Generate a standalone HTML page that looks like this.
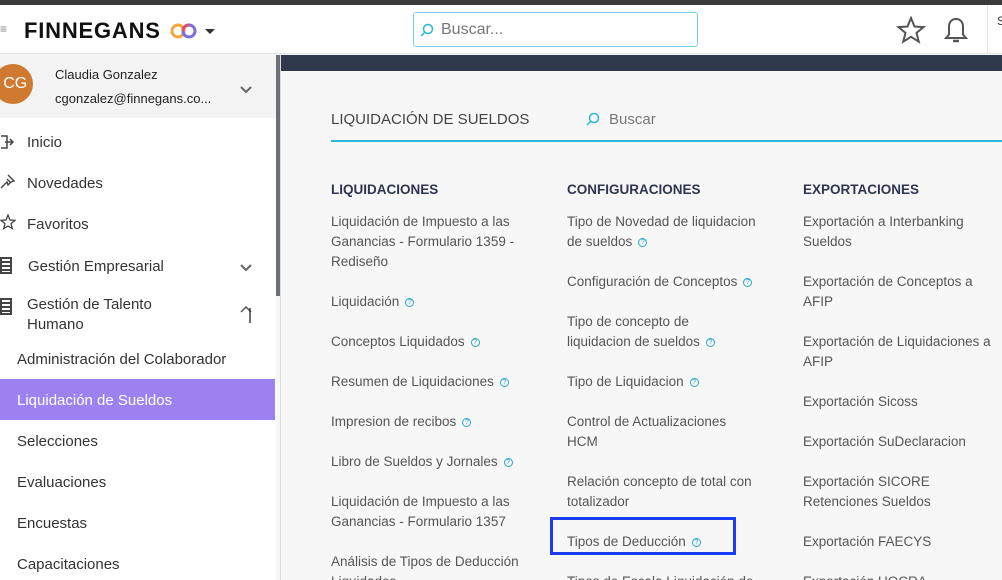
<html><head><style>
*{margin:0;padding:0;box-sizing:border-box}
html,body{width:1002px;height:580px;overflow:hidden}
body{font-family:"Liberation Sans",sans-serif;background:#f7f7f7;position:relative;color:#444}
.a{position:absolute;white-space:nowrap}
.q{display:inline-block;width:9px;height:9px;border:1px solid #29a8cc;border-radius:50%;font-size:7px;line-height:7px;text-align:center;color:#29a8cc;margin-left:6px;vertical-align:2px}
.it{font-size:13.5px;color:#555;line-height:20px}
.h{font-size:13.5px;font-weight:bold;color:#2d3550}
.m{font-size:15px;color:#333}
</style></head><body>
<div class="a" style="left:0;top:0;width:1002px;height:5px;background:#3a3a3a"></div>
<div class="a" style="left:0;top:5px;width:1002px;height:49px;background:#fff;border-bottom:1px solid #e2e6e2"></div>
<div class="a" style="left:0;top:22px;font-size:12px;color:#888">≡</div>
<div class="a" style="left:24px;top:18px;font-size:22px;font-weight:bold;color:#111;letter-spacing:0.8px">FINNEGANS</div>
<svg class="a" style="left:170px;top:22px" width="28" height="18"><circle cx="8" cy="9" r="6" fill="none" stroke="#f4a640" stroke-width="3"/><circle cx="19" cy="9" r="6" fill="none" stroke="#7b6fe0" stroke-width="3"/><path d="M19 3a6 6 0 0 0-6 6" fill="none" stroke="#e84a6a" stroke-width="3"/></svg>
<div class="a" style="left:205px;top:29px;border:5px solid transparent;border-top:5px solid #333"></div>
<div class="a" style="left:413px;top:12px;width:285px;height:35px;border:1px solid #7ad0e6;border-radius:3px;background:#fff"></div>
<svg class="a" style="left:420px;top:23px" width="14" height="14"><circle cx="8" cy="6" r="4.5" fill="none" stroke="#29b6d8" stroke-width="1.5"/><path d="M5 9L1 13" stroke="#29b6d8" stroke-width="1.5"/></svg>
<div class="a" style="left:441px;top:21px;font-size:16px;color:#777">Buscar...</div>
<svg class="a" style="left:896px;top:16px" width="30" height="30"><path d="M15 2l3.5 8.5 9 .6-7 5.8 2.3 8.8L15 20.8l-7.8 4.9 2.3-8.8-7-5.8 9-.6z" fill="none" stroke="#555" stroke-width="2"/></svg>
<svg class="a" style="left:942px;top:16px" width="28" height="30"><path d="M14 3c-4.5 0-7 3.5-7 7.5v8L4 22h20l-3-3.5v-8C21 6.5 18.5 3 14 3z" fill="none" stroke="#555" stroke-width="2"/><path d="M11 25h6" stroke="#555" stroke-width="2.5"/></svg>
<div class="a" style="left:987px;top:5px;width:1px;height:49px;background:#e6e6e6"></div>
<div class="a" style="left:997px;top:14px;font-size:12px;color:#333">S</div>
<!-- sidebar -->
<div class="a" style="left:0;top:55px;width:276px;height:525px;background:#fff"></div>
<div class="a" style="left:0;top:55px;width:276px;height:63px;background:#f3f3f3"></div>
<div class="a" style="left:-7px;top:64px;width:40px;height:40px;border-radius:50%;background:#cf7a30;color:#fff;font-size:16px;line-height:40px;text-align:center">&nbsp;CG</div>
<div class="a" style="left:55px;top:67px;font-size:13px;color:#222">Claudia Gonzalez</div>
<div class="a" style="left:55px;top:91px;font-size:13px;color:#222">cgonzalez@finnegans.co...</div>
<svg class="a" style="left:239px;top:85px" width="14" height="10"><path d="M2 2l5 5 5-5" fill="none" stroke="#666" stroke-width="2"/></svg>
<div class="a" style="left:276px;top:55px;width:5px;height:241px;background:#6b7078"></div>
<div class="a" style="left:280px;top:55px;width:1px;height:525px;background:#ddd"></div>
<div class="a m" style="left:27px;top:134px">Inicio</div>
<div class="a m" style="left:27px;top:175px">Novedades</div>
<div class="a m" style="left:27px;top:216px">Favoritos</div>
<div class="a m" style="left:28px;top:258px">Gestión Empresarial</div>
<div class="a m" style="left:27px;top:295px;line-height:20px">Gestión de Talento<br>Humano</div>
<svg class="a" style="left:0;top:134px" width="14" height="16"><path d="M1 2h6v12H1M5 8h8M10 5l3 3-3 3" fill="none" stroke="#444" stroke-width="1.5"/></svg>
<svg class="a" style="left:0;top:173px" width="16" height="16"><path d="M8 2l6 6-3 1-3 3-1-3-6 6M7 6l3 3" fill="none" stroke="#444" stroke-width="1.4"/></svg>
<svg class="a" style="left:0;top:214px" width="16" height="16"><path d="M8 1l2 5 5 .3-4 3.3 1.3 5L8 12l-4.3 2.6 1.3-5-4-3.3 5-.3z" fill="none" stroke="#444" stroke-width="1.3"/></svg>
<div class="a" style="left:0;top:257px;width:12px;height:17px;border:2px solid #444;background:repeating-linear-gradient(#fff 0 2px,#444 2px 4px)"></div>
<div class="a" style="left:0;top:298px;width:12px;height:17px;border:2px solid #444;background:repeating-linear-gradient(#fff 0 2px,#444 2px 4px)"></div>
<svg class="a" style="left:239px;top:263px" width="14" height="10"><path d="M2 2l5 5 5-5" fill="none" stroke="#666" stroke-width="2"/></svg>
<svg class="a" style="left:239px;top:305px" width="14" height="20"><path d="M2 7l5-5 5 5" fill="none" stroke="#555" stroke-width="1.5"/><path d="M11 3v15" stroke="#222" stroke-width="1.3"/></svg>
<div class="a m" style="left:17px;top:351px">Administración del Colaborador</div>
<div class="a" style="left:0;top:379px;width:275px;height:41px;background:#9b82f0"></div>
<div class="a m" style="left:17px;top:392px;color:#fff">Liquidación de Sueldos</div>
<div class="a m" style="left:17px;top:433px">Selecciones</div>
<div class="a m" style="left:17px;top:474px">Evaluaciones</div>
<div class="a m" style="left:17px;top:515px">Encuestas</div>
<div class="a m" style="left:17px;top:556px">Capacitaciones</div>
<!-- main -->
<div class="a" style="left:281px;top:55px;width:721px;height:16px;background:#2e3a4b"></div>
<div class="a" style="left:331px;top:111px;font-size:15px;color:#444">LIQUIDACIÓN DE SUELDOS</div>
<svg class="a" style="left:586px;top:112px" width="14" height="14"><circle cx="8" cy="6" r="4.5" fill="none" stroke="#29b6d8" stroke-width="1.5"/><path d="M5 9L1 13" stroke="#29b6d8" stroke-width="1.5"/></svg>
<div class="a" style="left:609px;top:111px;font-size:15px;color:#777">Buscar</div>
<div class="a" style="left:331px;top:140px;width:671px;height:1.5px;background:#29b6d8"></div>
<div class="a h" style="left:331px;top:182px">LIQUIDACIONES</div>
<div class="a h" style="left:567px;top:182px">CONFIGURACIONES</div>
<div class="a h" style="left:803px;top:182px">EXPORTACIONES</div>
<div class="a it" style="left:331px;top:212px">Liquidación de Impuesto a las<br>Ganancias - Formulario 1359 -<br>Rediseño</div>
<div class="a it" style="left:331px;top:292px">Liquidación<span class="q">?</span></div>
<div class="a it" style="left:331px;top:332px">Conceptos Liquidados<span class="q">?</span></div>
<div class="a it" style="left:331px;top:372px">Resumen de Liquidaciones<span class="q">?</span></div>
<div class="a it" style="left:331px;top:412px">Impresion de recibos<span class="q">?</span></div>
<div class="a it" style="left:331px;top:452px">Libro de Sueldos y Jornales<span class="q">?</span></div>
<div class="a it" style="left:331px;top:492px">Liquidación de Impuesto a las<br>Ganancias - Formulario 1357</div>
<div class="a it" style="left:331px;top:552px">Análisis de Tipos de Deducción<br>Liquidados</div>
<div class="a it" style="left:567px;top:212px">Tipo de Novedad de liquidacion<br>de sueldos<span class="q">?</span></div>
<div class="a it" style="left:567px;top:272px">Configuración de Conceptos<span class="q">?</span></div>
<div class="a it" style="left:567px;top:312px">Tipo de concepto de<br>liquidacion de sueldos<span class="q">?</span></div>
<div class="a it" style="left:567px;top:372px">Tipo de Liquidacion<span class="q">?</span></div>
<div class="a it" style="left:567px;top:412px">Control de Actualizaciones<br>HCM</div>
<div class="a it" style="left:567px;top:472px">Relación concepto de total con<br>totalizador</div>
<div class="a" style="left:550px;top:517px;width:186px;height:38px;border:3px solid #1a3cf5"></div>
<div class="a it" style="left:567px;top:532px">Tipos de Deducción<span class="q">?</span></div>
<div class="a it" style="left:567px;top:572px">Tipos de Escala Liquidación de</div>
<div class="a it" style="left:803px;top:212px">Exportación a Interbanking<br>Sueldos</div>
<div class="a it" style="left:803px;top:272px">Exportación de Conceptos a<br>AFIP</div>
<div class="a it" style="left:803px;top:332px">Exportación de Liquidaciones a<br>AFIP</div>
<div class="a it" style="left:803px;top:392px">Exportación Sicoss</div>
<div class="a it" style="left:803px;top:432px">Exportación SuDeclaracion</div>
<div class="a it" style="left:803px;top:472px">Exportación SICORE<br>Retenciones Sueldos</div>
<div class="a it" style="left:803px;top:532px">Exportación FAECYS</div>
<div class="a it" style="left:803px;top:572px">Exportación UOCRA</div>
</body></html>
